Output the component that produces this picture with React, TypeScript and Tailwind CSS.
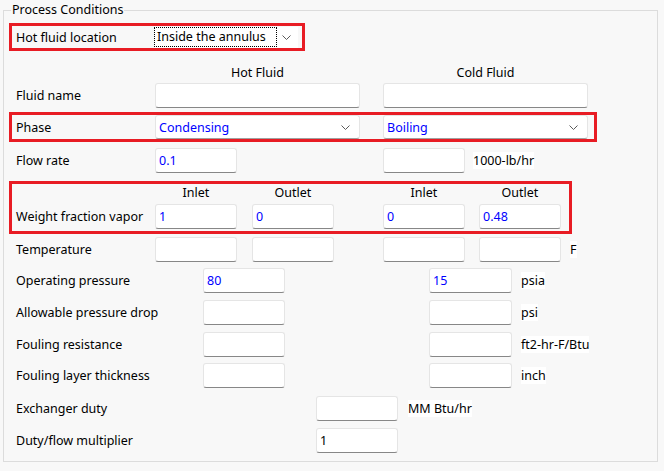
import React from "react"

function Chevron() {
  return (
    <svg width="9" height="5" viewBox="0 0 9 5" className="shrink-0">
      <polyline points="0.5,0.5 4.5,4.5 8.5,0.5" fill="none" stroke="#5a5a5a" strokeWidth="1" />
    </svg>
  )
}

function Field({ className = "", value = "", tone = "text-[#0000ff]" }: { className?: string; value?: string; tone?: string }) {
  return (
    <div
      className={`h-[25px] shrink-0 bg-white border border-[#e5e5e5] border-b-[#878787] rounded-[3px] flex items-center pl-[3px] pt-[2px] ${tone} ${className}`}
    >
      {value}
    </div>
  )
}

function Combo({ className = "", value }: { className?: string; value: string }) {
  return (
    <div
      className={`h-[24px] shrink-0 bg-white border border-[#e5e5e5] border-b-[#a0a0a0] rounded-[3px] flex items-center justify-between pl-[3px] pr-[9px] text-[#0000ff] ${className}`}
    >
      <span className="pt-[2px]">{value}</span>
      <Chevron />
    </div>
  )
}

function Unit({ children, className = "" }: { children: React.ReactNode; className?: string }) {
  return <span className={`bg-white leading-[16px] pt-[1px] ${className}`}>{children}</span>
}

export default function App() {
  return (
    <div className="w-[664px] h-[471px] bg-[#f8f8f8] pt-[10px] pl-[3px] text-[12.5px] text-black font-['Noto_Sans',sans-serif] overflow-hidden">
      <div className="relative w-[655px] h-[452px] border border-[#dcdcdc] flex flex-col">
        <span className="absolute left-[7px] top-[-9px] px-[1px] bg-[#f8f8f8] leading-[16px]">Process Conditions</span>

        {/* hot fluid location */}
        <div className="mt-[12px] ml-[5px] w-[296px] h-[28px] border-[3px] border-[#e81c24] flex items-center">
          <span className="w-[143px] pl-[4px] pt-[2px] shrink-0">Hot fluid location</span>
          <div className="w-[143px] h-[21px] bg-white flex items-center justify-between pr-[7px]">
            <span className="outline outline-1 outline-dotted outline-black w-[121px] h-[18px] flex items-center pl-[2px] pt-[1px]">
              Inside the annulus
            </span>
            <Chevron />
          </div>
        </div>

        {/* column headers */}
        <div className="mt-[11px] h-[20px] flex items-center pt-[2px]">
          <span className="w-[151px] shrink-0" />
          <span className="w-[205px] text-center">Hot Fluid</span>
          <span className="w-[205px] ml-[23px] text-center">Cold Fluid</span>
        </div>

        <div className="mt-[1px] flex items-center">
          <span className="w-[151px] pl-[12px] pt-[2px] shrink-0">Fluid name</span>
          <Field className="w-[205px]" />
          <Field className="w-[205px] ml-[23px]" />
        </div>

        {/* phase */}
        <div className="mt-[4px] ml-[5px] w-[588px] h-[30px] border-[3px] border-[#e81c24] flex items-center">
          <span className="w-[143px] pl-[4px] pt-[2px] shrink-0">Phase</span>
          <Combo className="w-[205px]" value="Condensing" />
          <Combo className="w-[205px] ml-[23px]" value="Boiling" />
        </div>

        <div className="mt-[6px] flex items-center">
          <span className="w-[151px] pl-[12px] pt-[2px] shrink-0">Flow rate</span>
          <Field className="w-[82px]" value="0.1" />
          <Field className="w-[82px] ml-[146px]" />
          <Unit className="ml-[8px]">1000-lb/hr</Unit>
        </div>

        {/* weight fraction vapor */}
        <div className="mt-[8px] ml-[5px] w-[563px] h-[53px] border-[3px] border-[#e81c24] flex flex-col">
          <div className="h-[16px] flex items-center pt-[2px]">
            <span className="w-[143px] shrink-0" />
            <span className="w-[82px] text-center">Inlet</span>
            <span className="w-[82px] ml-[15px] text-center">Outlet</span>
            <span className="w-[82px] ml-[49px] text-center">Inlet</span>
            <span className="w-[82px] ml-[14px] text-center">Outlet</span>
          </div>
          <div className="mt-[4px] flex items-center">
            <span className="w-[143px] pl-[4px] pt-[2px] shrink-0">Weight fraction vapor</span>
            <Field className="w-[82px]" value="1" />
            <Field className="w-[82px] ml-[15px]" value="0" />
            <Field className="w-[82px] ml-[49px]" value="0" />
            <Field className="w-[82px] ml-[14px]" value="0.48" />
          </div>
        </div>

        <div className="mt-[3px] flex items-center">
          <span className="w-[151px] pl-[12px] pt-[2px] shrink-0">Temperature</span>
          <Field className="w-[82px]" />
          <Field className="w-[82px] ml-[15px]" />
          <Field className="w-[82px] ml-[49px]" />
          <Field className="w-[82px] ml-[14px]" />
          <Unit className="ml-[9px]">F</Unit>
        </div>

        {/* pressures and fouling */}
        <div className="mt-[6px] flex items-center">
          <span className="w-[199px] pl-[12px] pt-[2px] shrink-0">Operating pressure</span>
          <Field className="w-[82px]" value="80" />
          <Field className="w-[83px] ml-[144px]" value="15" />
          <Unit className="ml-[9px]">psia</Unit>
        </div>
        <div className="mt-[7px] flex items-center">
          <span className="w-[199px] pl-[12px] pt-[2px] shrink-0">Allowable pressure drop</span>
          <Field className="w-[82px]" />
          <Field className="w-[83px] ml-[144px]" />
          <Unit className="ml-[9px]">psi</Unit>
        </div>
        <div className="mt-[7px] flex items-center">
          <span className="w-[199px] pl-[12px] pt-[2px] shrink-0">Fouling resistance</span>
          <Field className="w-[82px]" />
          <Field className="w-[83px] ml-[144px]" />
          <Unit className="ml-[9px]">ft2-hr-F/Btu</Unit>
        </div>
        <div className="mt-[6px] flex items-center">
          <span className="w-[199px] pl-[12px] pt-[2px] shrink-0">Fouling layer thickness</span>
          <Field className="w-[82px]" />
          <Field className="w-[83px] ml-[144px]" />
          <Unit className="ml-[9px]">inch</Unit>
        </div>

        <div className="mt-[8px] flex items-center">
          <span className="w-[312px] pl-[12px] pt-[2px] shrink-0">Exchanger duty</span>
          <Field className="w-[82px]" />
          <Unit className="ml-[10px]">MM Btu/hr</Unit>
        </div>
        <div className="mt-[7px] flex items-center">
          <span className="w-[312px] pl-[12px] pt-[2px] shrink-0">Duty/flow multiplier</span>
          <Field className="w-[82px]" value="1" tone="text-black" />
        </div>
      </div>
    </div>
  )
}
